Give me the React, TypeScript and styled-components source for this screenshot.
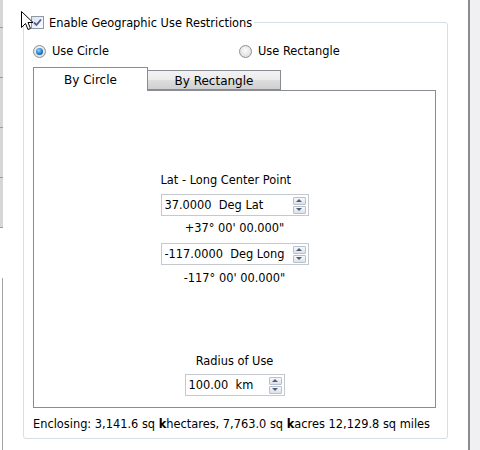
import styled, { createGlobalStyle } from "styled-components";

const GlobalStyle = createGlobalStyle`
  html, body {
    margin: 0;
    padding: 0;
    background: #fff;
  }
  body {
    font-family: "DejaVu Sans", "Liberation Sans", sans-serif;
    font-size: 11.4px;
    color: #000;
  }
`;

const Window = styled.div`
  position: relative;
  display: flex;
  width: 480px;
  height: 450px;
  overflow: hidden;
  background: #fff;
`;

const LeftRail = styled.div`
  width: 3px;
  display: flex;
  flex-direction: column;
`;

const RailTab = styled.div<{ $h: number }>`
  height: ${({ $h }) => $h}px;
  box-sizing: border-box;
  background: #d6d6d6;
  border-bottom: 1px solid #9c9c9c;
`;

const RailGap = styled.div`
  height: 50px;
`;

const RailEdge = styled.div`
  flex: 1;
  border-right: 1px solid #a4a4a4;
`;

const Main = styled.div`
  width: 465px;
  box-sizing: border-box;
  padding: 0 20px;
`;

const Divider = styled.div`
  width: 2px;
  background: #8a8a90;
`;

const SidePane = styled.div`
  flex: 1;
  background: #f0f0f0;
`;

const Group = styled.fieldset`
  box-sizing: border-box;
  margin: 14px 0 0 0;
  padding: 0 11px 0 9px;
  height: 425px;
  border: 1px solid #d5dfe5;
  border-radius: 3px;
  min-width: 0;
`;

const Legend = styled.legend`
  display: flex;
  align-items: center;
  gap: 5px;
  height: 16px;
  margin-left: -2px;
  padding: 1px 2px 0 0;
  box-sizing: border-box;
`;

const CheckBox = styled.span`
  position: relative;
  width: 13px;
  height: 13px;
  box-sizing: border-box;
  border: 1px solid #8e9aa8;
  background: linear-gradient(135deg, #dde3ea, #fbfcfd);
  display: inline-flex;
  align-items: center;
  justify-content: center;
`;

const RadioRow = styled.div`
  display: grid;
  grid-template-columns: 206px 1fr;
  margin-top: 14px;
  height: 14px;
`;

const RadioOption = styled.label`
  display: flex;
  align-items: center;
  gap: 6px;
`;

const Radio = styled.span<{ $checked?: boolean }>`
  position: relative;
  width: 13px;
  height: 13px;
  box-sizing: border-box;
  border-radius: 50%;
  border: 1px solid #8e8f8f;
  background: radial-gradient(circle at 50% 40%, #fbfbfb, #d6d6d6);
  &::after {
    content: "";
    display: ${({ $checked }) => ($checked ? "block" : "none")};
    position: absolute;
    left: 2px;
    top: 2px;
    width: 7px;
    height: 7px;
    border-radius: 50%;
    background: radial-gradient(circle at 40% 35%, #8fd3ff, #1a74c8 60%, #0c3f80);
  }
`;

const TabBar = styled.div`
  display: flex;
  align-items: flex-end;
  margin-top: 8px;
  height: 24px;
`;

const Tab = styled.div<{ $active?: boolean; $w: number }>`
  box-sizing: border-box;
  width: ${({ $w }) => $w}px;
  height: ${({ $active }) => ($active ? 24 : 20)}px;
  display: flex;
  align-items: center;
  justify-content: center;
  font-size: 12px;
  border: 1px solid #898c95;
  border-bottom: ${({ $active }) => ($active ? "none" : "1px solid #898c95")};
  border-left: ${({ $active }) => ($active ? "1px solid #898c95" : "none")};
  background: ${({ $active }) =>
    $active ? "#fff" : "linear-gradient(#f2f2f2, #ebebeb 50%, #dddddd 51%, #cfcfcf)"};
  margin-bottom: ${({ $active }) => ($active ? "-1px" : "0")};
  position: relative;
  z-index: ${({ $active }) => ($active ? 1 : 0)};
  padding-top: ${({ $active }) => ($active ? "0" : "1px")};
`;

const Panel = styled.div`
  box-sizing: border-box;
  height: 318px;
  border: 1px solid #898c95;
  display: flex;
  flex-direction: column;
  align-items: center;
  padding-top: 82px;
`;

const Caption = styled.div<{ $mt?: number; $center?: boolean }>`
  line-height: 14px;
  margin-top: ${({ $mt }) => $mt ?? 0}px;
  white-space: pre;
  align-self: ${({ $center }) => ($center ? "center" : "auto")};
`;

const PointBlock = styled.div`
  display: flex;
  flex-direction: column;
  align-items: flex-start;
  width: 148px;
`;

const SpinBox = styled.div<{ $w: number; $mt?: number }>`
  box-sizing: border-box;
  width: ${({ $w }) => $w}px;
  height: 22px;
  margin-top: ${({ $mt }) => $mt ?? 0}px;
  border: 1px solid #c4c9d0;
  display: flex;
  align-items: center;
  padding: 0 2px 0 3px;
  align-self: center;
`;

const SpinValue = styled.span`
  flex: 1;
  white-space: pre;
  overflow: hidden;
`;

const SpinButtons = styled.div`
  display: flex;
  flex-direction: column;
  gap: 1px;
`;

const SpinButton = styled.div`
  box-sizing: border-box;
  width: 13px;
  height: 8px;
  border: 1px solid #b7c0cc;
  border-radius: 1px;
  background: linear-gradient(#f7f8fa, #dde2e8);
  display: flex;
  align-items: center;
  justify-content: center;
`;

const Arrow = styled.span<{ $down?: boolean }>`
  width: 0;
  height: 0;
  border-left: 3px solid transparent;
  border-right: 3px solid transparent;
  ${({ $down }) =>
    $down ? "border-top: 3px solid #4c5f80;" : "border-bottom: 3px solid #4c5f80;"}
`;

const Footer = styled.div`
  margin-top: 9px;
  line-height: 14px;
  white-space: nowrap;
  b {
    font-weight: bold;
  }
`;

const Cursor = styled.svg`
  position: absolute;
  left: 21px;
  top: 11px;
`;

function Spinner({ value, w, mt }: { value: string; w: number; mt?: number }) {
  return (
    <SpinBox $w={w} $mt={mt}>
      <SpinValue>{value}</SpinValue>
      <SpinButtons>
        <SpinButton>
          <Arrow />
        </SpinButton>
        <SpinButton>
          <Arrow $down />
        </SpinButton>
      </SpinButtons>
    </SpinBox>
  );
}

export default function App() {
  return (
    <>
      <GlobalStyle />
      <Window>
        <LeftRail>
          <RailTab $h={28} />
          <RailTab $h={50} />
          <RailTab $h={50} />
          <RailTab $h={50} />
          <RailTab $h={50} />
          <RailGap />
          <RailEdge />
        </LeftRail>
        <Main>
          <Group>
            <Legend>
              <CheckBox>
                <svg width="9" height="9" viewBox="0 0 9 9">
                  <path d="M1 4.5 L3.5 7 L8 1.5" fill="none" stroke="#4a5aa8" strokeWidth="1.8" />
                </svg>
              </CheckBox>
              Enable Geographic Use Restrictions
            </Legend>
            <RadioRow>
              <RadioOption>
                <Radio $checked />
                Use Circle
              </RadioOption>
              <RadioOption>
                <Radio />
                Use Rectangle
              </RadioOption>
            </RadioRow>
            <TabBar>
              <Tab $active $w={115}>By Circle</Tab>
              <Tab $w={133}>By Rectangle</Tab>
            </TabBar>
            <Panel>
              <PointBlock>
                <Caption>Lat - Long Center Point</Caption>
                <Spinner value="37.0000  Deg Lat" w={148} mt={7} />
                <Caption $mt={5} $center>+37° 00' 00.000"</Caption>
                <Spinner value="-117.0000  Deg Long" w={148} mt={8} />
                <Caption $mt={6} $center>-117° 00' 00.000"</Caption>
              </PointBlock>
              <Caption $mt={69}>Radius of Use</Caption>
              <Spinner value="100.00  km" w={100} mt={6} />
            </Panel>
            <Footer>
              Enclosing: 3,141.6 sq <b>k</b>hectares, 7,763.0 sq <b>k</b>acres 12,129.8 sq miles
            </Footer>
          </Group>
        </Main>
        <Divider />
        <SidePane />
        <Cursor width="13" height="20" viewBox="0 0 13 20">
          <path
            d="M0.5 0.5 L0.5 16.5 L4.5 12.5 L7 18.5 L9.5 17.5 L7 11.5 L12 11.5 Z"
            fill="#fff"
            stroke="#000"
            strokeWidth="1"
          />
        </Cursor>
      </Window>
    </>
  );
}
